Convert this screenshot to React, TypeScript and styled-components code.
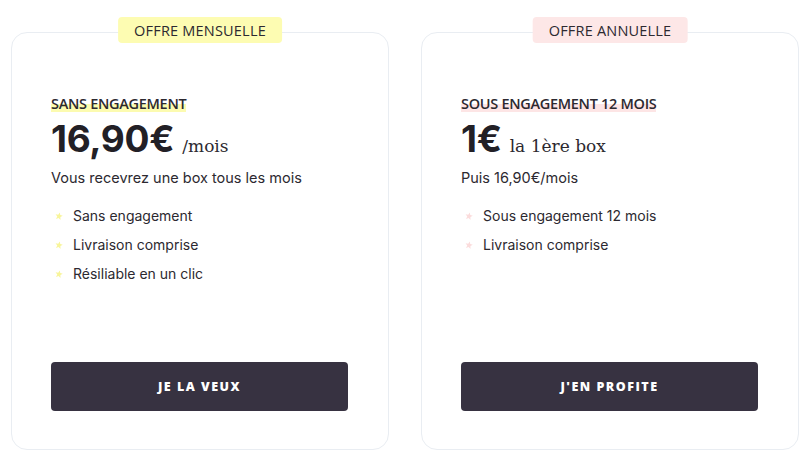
import React from "react";
import styled, { createGlobalStyle } from "styled-components";

const Global = createGlobalStyle`
  html, body { margin: 0; padding: 0; background: #ffffff; }
  body { font-family: "Inter", "Noto Sans", sans-serif; color: #2c2930; }
  * { box-sizing: border-box; }
`;

const Page = styled.div`
  display: grid;
  grid-template-columns: 378px 378px;
  column-gap: 32px;
  padding: 32px 1px 0 11px;
  width: 800px;
  height: 451px;
`;

const Card = styled.section`
  position: relative;
  height: 418px;
  border: 1.5px solid #e9edf2;
  border-radius: 16px;
  padding: 61px 40px 38px 39px;
  display: flex;
  flex-direction: column;
`;

const Badge = styled.div<{ $bg: string }>`
  position: absolute;
  top: -16px;
  left: 50%;
  transform: translateX(-50%);
  height: 26px;
  padding: 0 16px;
  display: flex;
  align-items: center;
  background: ${(p) => p.$bg};
  border-radius: 4px;
  font-family: "Open Sans", sans-serif;
  font-size: 14.5px;
  font-weight: 500;
  letter-spacing: 0.2px;
  color: #2c2930;
  white-space: nowrap;
`;

const Label = styled.span<{ $hl: string }>`
  align-self: flex-start;
  font-family: "Open Sans", sans-serif;
  font-size: 14.5px;
  font-weight: 600;
  line-height: 20px;
  color: #2c2930;
  letter-spacing: -0.3px;
  background: linear-gradient(to bottom, transparent 48%, ${(p) => p.$hl} 48%, ${(p) => p.$hl} 88%, transparent 88%);
`;

const PriceRow = styled.div`
  display: flex;
  align-items: baseline;
  gap: 8px;
  margin-top: 4px;
`;

const Price = styled.span`
  font-family: "Inter", sans-serif;
  font-size: 37px;
  font-weight: 700;
  letter-spacing: -0.3px;
  line-height: 42px;
  color: #222026;
`;

const PriceNote = styled.span`
  font-family: "DejaVu Serif", serif;
  font-size: 17px;
  color: #2c2930;
`;

const Sub = styled.p`
  margin: 9px 0 0;
  font-family: "Inter", sans-serif;
  font-size: 14.5px;
  line-height: 18px;
  color: #2c2930;
`;

const List = styled.ul`
  list-style: none;
  margin: 20px 0 0;
  padding: 0 0 0 4px;
  display: flex;
  flex-direction: column;
  gap: 11px;
`;

const Item = styled.li`
  display: flex;
  align-items: center;
  gap: 10px;
  font-family: "Inter", sans-serif;
  font-size: 14px;
  line-height: 18px;
  color: #2c2930;
`;

const Button = styled.button`
  margin-top: auto;
  height: 49px;
  width: 297px;
  border: none;
  border-radius: 4px;
  background: #373241;
  color: #ffffff;
  font-family: "Open Sans", sans-serif;
  font-size: 12.5px;
  font-weight: 800;
  letter-spacing: 1.5px;
  cursor: pointer;
`;

const Star = ({ color }: { color: string }) => (
  <svg width="8" height="8" viewBox="0 0 10 10" aria-hidden>
    <polygon
      points="5,0.5 6.3,3.6 9.6,3.8 7,6 7.9,9.4 5,7.5 2.1,9.4 3,6 0.4,3.8 3.7,3.6"
      fill={color}
      transform="rotate(12 5 5)"
    />
  </svg>
);

type Offer = {
  badge: string;
  badgeBg: string;
  label: string;
  hl: string;
  price: string;
  note: string;
  sub: string;
  items: string[];
  star: string;
  cta: string;
};

const offers: Offer[] = [
  {
    badge: "OFFRE MENSUELLE",
    badgeBg: "#fdfcb2",
    label: "SANS ENGAGEMENT",
    hl: "#fcfbb0",
    price: "16,90€",
    note: "/mois",
    sub: "Vous recevrez une box tous les mois",
    items: ["Sans engagement", "Livraison comprise", "Résiliable en un clic"],
    star: "#f8f59b",
    cta: "JE LA VEUX",
  },
  {
    badge: "OFFRE ANNUELLE",
    badgeBg: "#fde7e7",
    label: "SOUS ENGAGEMENT 12 MOIS",
    hl: "#fde5e5",
    price: "1€",
    note: "la 1ère box",
    sub: "Puis 16,90€/mois",
    items: ["Sous engagement 12 mois", "Livraison comprise"],
    star: "#fbdcdc",
    cta: "J'EN PROFITE",
  },
];

export default function App() {
  return (
    <>
      <Global />
      <Page>
        {offers.map((o) => (
          <Card key={o.badge}>
            <Badge $bg={o.badgeBg}>{o.badge}</Badge>
            <Label $hl={o.hl}>{o.label}</Label>
            <PriceRow>
              <Price>{o.price}</Price>
              <PriceNote>{o.note}</PriceNote>
            </PriceRow>
            <Sub>{o.sub}</Sub>
            <List>
              {o.items.map((it) => (
                <Item key={it}>
                  <Star color={o.star} />
                  {it}
                </Item>
              ))}
            </List>
            <Button>{o.cta}</Button>
          </Card>
        ))}
      </Page>
    </>
  );
}
